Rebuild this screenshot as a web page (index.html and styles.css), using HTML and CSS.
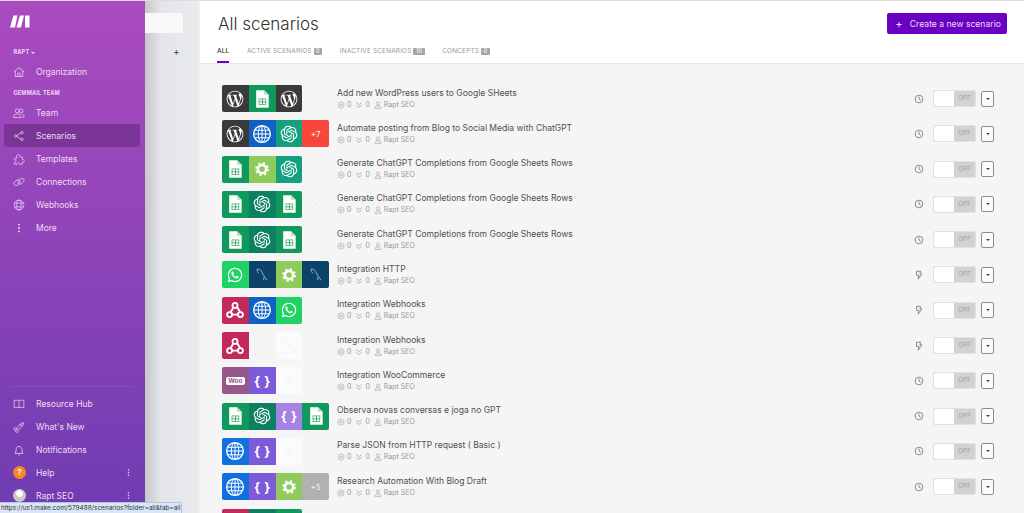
FILE: index.html
```html
<!DOCTYPE html>
<html lang="en">
<head>
    <meta charset="UTF-8">
    <title>All scenarios</title>
    <link rel="stylesheet" href="styles.css">
</head>
<body>
    <svg class="sprites">
        <symbol id="i-wp" viewBox="-2.4 -2.4 28.8 28.8"><path fill="#fff" d="M21.469 6.825c.84 1.537 1.318 3.3 1.318 5.175 0 3.979-2.156 7.456-5.363 9.325l3.295-9.527c.615-1.54.82-2.771.82-3.864 0-.405-.026-.78-.07-1.11m-7.981.105c.647-.03 1.232-.105 1.232-.105.582-.075.514-.93-.067-.899 0 0-1.755.135-2.88.135-1.064 0-2.85-.15-2.85-.15-.585-.03-.661.855-.075.885 0 0 .54.061 1.125.09l1.68 4.605-2.37 7.08L5.354 6.9c.649-.03 1.234-.1 1.234-.1.585-.075.516-.93-.065-.896 0 0-1.746.138-2.874.138-.2 0-.438-.008-.69-.015C4.911 3.15 8.235 1.215 12 1.215c2.809 0 5.365 1.072 7.286 2.833-.046-.003-.091-.009-.141-.009-1.06 0-1.812.923-1.812 1.914 0 .89.513 1.643 1.06 2.531.411.72.89 1.643.89 2.977 0 .915-.354 1.994-.821 3.479l-1.075 3.585-3.9-11.61.001.014zM12 22.784c-1.059 0-2.081-.153-3.048-.437l3.237-9.406 3.315 9.087c.024.053.05.101.078.149-1.12.393-2.325.609-3.582.609M1.211 12c0-1.564.336-3.05.935-4.39L7.29 21.709C3.694 19.96 1.212 16.271 1.211 12M12 0C5.385 0 0 5.385 0 12s5.385 12 12 12 12-5.385 12-12S18.615 0 12 0"/></symbol>
        <symbol id="i-sheet" viewBox="0 0 24 24"><path d="M5 1.5h9.5L20 7v15.5H5z" fill="#fff"/><path d="M14.5 1.5V7H20z" fill="#b9dcc9"/><path d="M8 11.5h9v7.5H8z" fill="#1a9c5e"/><path d="M8.8 12.3h3.2v2.6H8.8zM13 12.3h3.2v2.6H13zM8.8 15.8h3.2v2.4H8.8zM13 15.8h3.2v2.4H13z" fill="#fff"/></symbol>
        <symbol id="i-gear" viewBox="-2 -2 28 28"><circle cx="12" cy="12" r="5.7" fill="none" stroke="#fff" stroke-width="3.4"/><circle cx="12" cy="12" r="8.3" fill="none" stroke="#fff" stroke-width="2.6" stroke-dasharray="3.26 3.26"/></symbol>
        <symbol id="i-ai" viewBox="-2.4 -2.4 28.8 28.8"><path fill="#fff" d="M22.2819 9.8211a5.9847 5.9847 0 0 0-.5157-4.9108 6.0462 6.0462 0 0 0-6.5098-2.9A6.0651 6.0651 0 0 0 4.9807 4.1818a5.9847 5.9847 0 0 0-3.9977 2.9 6.0462 6.0462 0 0 0 .7427 7.0966 5.98 5.98 0 0 0 .511 4.9107 6.051 6.051 0 0 0 6.5146 2.9001A5.9847 5.9847 0 0 0 13.2599 24a6.0557 6.0557 0 0 0 5.7718-4.2058 5.9894 5.9894 0 0 0 3.9977-2.9001 6.0557 6.0557 0 0 0-.7475-7.0729zm-9.022 12.6081a4.4755 4.4755 0 0 1-2.8764-1.0408l.1419-.0804 4.7783-2.7582a.7948.7948 0 0 0 .3927-.6813v-6.7369l2.02 1.1686a.071.071 0 0 1 .038.052v5.5826a4.504 4.504 0 0 1-4.4945 4.4944zm-9.6607-4.1254a4.4708 4.4708 0 0 1-.5346-3.0137l.142.0852 4.783 2.7582a.7712.7712 0 0 0 .7806 0l5.8428-3.3685v2.3324a.0804.0804 0 0 1-.0332.0615L9.74 19.9502a4.4992 4.4992 0 0 1-6.1408-1.6464zM2.3408 7.8956a4.485 4.485 0 0 1 2.3655-1.9728V11.6a.7664.7664 0 0 0 .3879.6765l5.8144 3.3543-2.0201 1.1685a.0757.0757 0 0 1-.071 0l-4.8303-2.7865A4.504 4.504 0 0 1 2.3408 7.872zm16.5963 3.8558L13.1038 8.364 15.1192 7.2a.0757.0757 0 0 1 .071 0l4.8303 2.7913a4.4944 4.4944 0 0 1-.6765 8.1042v-5.6772a.79.79 0 0 0-.407-.667zm2.0107-3.0231l-.142-.0852-4.7735-2.7818a.7759.7759 0 0 0-.7854 0L9.409 9.2297V6.8974a.0662.0662 0 0 1 .0284-.0615l4.8303-2.7866a4.4992 4.4992 0 0 1 6.6802 4.66zM8.3065 12.863l-2.02-1.1638a.0804.0804 0 0 1-.038-.0567V6.0742a4.4992 4.4992 0 0 1 7.3757-3.4537l-.142.0805L8.704 5.459a.7948.7948 0 0 0-.3927.6813zm1.0976-2.3654l2.602-1.4998 2.6069 1.4998v2.9994l-2.5974 1.4997-2.6067-1.4997Z"/></symbol>
        <symbol id="i-globe" viewBox="0 0 24 24"><g fill="none" stroke="#fff" stroke-width="1.2"><circle cx="12" cy="12" r="10" stroke-width="1.7"/><ellipse cx="12" cy="12" rx="4.5" ry="10"/><path d="M12 2v20M3 7.5h18M2 12h20M3 16.5h18"/></g></symbol>
        <symbol id="i-wa" viewBox="-4.5 -4.5 33 33"><path fill="#fff" d="M17.472 14.382c-.297-.149-1.758-.867-2.03-.967-.273-.099-.471-.148-.67.15-.197.297-.767.966-.94 1.164-.173.199-.347.223-.644.075-.297-.15-1.255-.463-2.39-1.475-.883-.788-1.48-1.761-1.653-2.059-.173-.297-.018-.458.13-.606.134-.133.298-.347.446-.52.149-.174.198-.298.298-.497.099-.198.05-.371-.025-.52-.075-.149-.669-1.612-.916-2.207-.242-.579-.487-.5-.669-.51-.173-.008-.371-.01-.57-.01-.198 0-.52.074-.792.372-.272.297-1.04 1.016-1.04 2.479 0 1.462 1.065 2.875 1.213 3.074.149.198 2.096 3.2 5.077 4.487.709.306 1.262.489 1.694.625.712.227 1.36.195 1.871.118.571-.085 1.758-.719 2.006-1.413.248-.694.248-1.289.173-1.413-.074-.124-.272-.198-.57-.347m-5.421 7.403h-.004a9.87 9.87 0 01-5.031-1.378l-.361-.214-3.741.982.998-3.648-.235-.374a9.86 9.86 0 01-1.51-5.26c.001-5.45 4.436-9.884 9.888-9.884 2.64 0 5.122 1.03 6.988 2.898a9.825 9.825 0 012.893 6.994c-.003 5.45-4.437 9.884-9.885 9.884m8.413-18.297A11.815 11.815 0 0012.05 0C5.495 0 .16 5.335.157 11.892c0 2.096.547 4.142 1.588 5.945L.057 24l6.305-1.654a11.882 11.882 0 005.683 1.448h.005c6.554 0 11.89-5.335 11.893-11.893a11.821 11.821 0 00-3.48-8.413z"/></symbol>
        <symbol id="i-sql" viewBox="0 0 24 24"><path d="M6 5c3-.5 5 1 6.500 4.500 1 2.500 2.500 5 5.500 8.500M6 5c.2 2 .8 3.500 2 5M14.500 14.500l-.5 3.500" fill="none" stroke="#b8cfdd" stroke-width=".9"/></symbol>
        <symbol id="i-hook" viewBox="0 0 24 24"><g fill="none" stroke="#fff" stroke-width="2.2"><circle cx="12" cy="6.500" r="3"/><circle cx="5.500" cy="17.500" r="3"/><circle cx="18.500" cy="17.500" r="3"/><path d="M9.700 9.500l-3.500 6M14.500 8.500l3.600 6M8.500 17.500h7"/></g></symbol>
        <symbol id="i-cross" viewBox="0 0 24 24"><path d="M3 3l18 18M21 3L3 21" stroke="#ececec" stroke-width=".6" fill="none"/></symbol>

        <symbol id="n-home" viewBox="0 0 16 16"><path d="M1.500 7.800L8 2l6.500 5.800M3 6.800V14h10V6.800M6.500 14V9.500h3V14" fill="none" stroke="currentColor"/></symbol>
        <symbol id="n-team" viewBox="0 0 16 16"><g fill="none" stroke="currentColor" stroke-width=".9"><circle cx="5.700" cy="5" r="2.700"/><circle cx="10.800" cy="5" r="2.500"/><path d="M1 14c0-3 1.500-4.800 4.700-4.800s4.800 1.800 4.800 4.800zM11 9.200c2.600 0 4 1.700 4 4.300h-3"/></g></symbol>
        <symbol id="n-share" viewBox="0 0 16 16"><g fill="none" stroke="currentColor" stroke-width=".9"><circle cx="3.500" cy="8" r="1.600"/><circle cx="12" cy="3.500" r="1.600"/><circle cx="12" cy="12.500" r="1.600"/><path d="M5 7.200l5.500-3M5 8.800l5.500 3"/></g></symbol>
        <symbol id="n-puzzle" viewBox="0 0 16 16"><path d="M2 7h3c-.8-3 0-5 2-5s2.600 2 2 3.500h3.500V8.500c1.500-.5 2.500.2 2.500 1.800s-1 2.200-2.500 1.700V15H8.500c.4-1.300-.2-2-1.500-2s-2 .8-1.500 2H2v-3c1 .3 1.800-.3 1.800-1.500S3 8.700 2 9z" fill="none" stroke="currentColor" stroke-width=".9"/></symbol>
        <symbol id="n-link" viewBox="0 0 16 16"><g fill="none" stroke="currentColor" stroke-width=".9"><rect x=".8" y="6.200" width="9" height="5.600" rx="2.800" transform="rotate(-40 5.300 9)"/><rect x="6.200" y="4.200" width="9" height="5.600" rx="2.800" transform="rotate(-40 10.700 7)"/></g></symbol>
        <symbol id="n-globe" viewBox="0 0 16 16"><g fill="none" stroke="currentColor" stroke-width=".9"><circle cx="8" cy="8" r="6.500"/><ellipse cx="8" cy="8" rx="3" ry="6.500"/><path d="M2 5.500h12M2 10.500h12"/></g></symbol>
        <symbol id="n-dots" viewBox="0 0 16 16"><circle cx="8" cy="3.500" r="1.300" fill="currentColor"/><circle cx="8" cy="8" r="1.300" fill="currentColor"/><circle cx="8" cy="12.500" r="1.300" fill="currentColor"/></symbol>
        <symbol id="n-book" viewBox="0 0 16 16"><path d="M1.500 3h5.200c.7 0 1.300.5 1.300 1.200C8 3.500 8.600 3 9.300 3h5.200v9.500H9.300c-.7 0-1.300.4-1.300 1 0-.6-.6-1-1.300-1H1.500zM8 4.200v9.300" fill="none" stroke="currentColor" stroke-width=".9"/></symbol>
        <symbol id="n-rocket" viewBox="0 0 16 16"><g fill="none" stroke="currentColor" stroke-width=".9"><path d="M5.500 8.500L10 3.500 14.500 2 13 6.500l-5 4.500z"/><circle cx="10.500" cy="5.500" r="1"/><rect x="1.500" y="9" width="3.500" height="3" rx=".8"/><rect x="3.500" y="12" width="3.500" height="3" rx=".8"/></g></symbol>
        <symbol id="n-bell" viewBox="0 0 16 16"><path d="M2.500 12.500c1-1 1.500-2 1.500-4.500 0-2.800 1.700-4.800 4-4.800s4 2 4 4.800c0 2.500.5 3.500 1.500 4.500zM7 14.500h2" fill="none" stroke="currentColor"/></symbol>

        <symbol id="m-ops" viewBox="0 0 12 12"><g fill="none" stroke="#999" stroke-width=".9"><path d="M6 1l4.300 2.500v5L6 11 1.700 8.500v-5z"/><circle cx="6" cy="6" r="1.700"/></g></symbol>
        <symbol id="m-down" viewBox="0 0 12 12"><path d="M2 2.500l4 3 4-3M2 6.500l4 3 4-3" fill="none" stroke="#999" stroke-width="1"/></symbol>
        <symbol id="m-user" viewBox="0 0 12 12"><g fill="none" stroke="#999" stroke-width=".9"><circle cx="6" cy="3.700" r="2.400"/><path d="M1.500 11c0-2.500 1.800-3.700 4.500-3.700s4.500 1.200 4.500 3.700z"/></g></symbol>
        <symbol id="s-clock" viewBox="0 0 12 12"><g fill="none" stroke="#777" stroke-width="1"><circle cx="6" cy="6" r="4.600"/><path d="M6 3v3.200l2.200 1.300"/></g></symbol>
        <symbol id="s-bolt" viewBox="0 0 12 12"><path d="M3 1.500h5L7 4.500h2.500L5 11l1-4.500H3z" fill="none" stroke="#777" stroke-width="1"/></symbol>
    </svg>

    <aside class="sidebar">
        <svg class="logo" viewBox="0 0 20 13"><path d="M0 12.500L3.500 .5H7.500L5 12.500zM6.500 12.500L10 .5H14L11 12.500zM15 .5H19.500V12.500H15z" fill="#fff"/></svg>
        <div class="org-label">RAPT <span class="caret"></span></div>
        <a class="nav-item"><svg><use href="#n-home"/></svg>Organization</a>
        <div class="team-label">GEMMAIL TEAM</div>
        <a class="nav-item"><svg><use href="#n-team"/></svg>Team</a>
        <a class="nav-item active"><svg><use href="#n-share"/></svg>Scenarios</a>
        <a class="nav-item"><svg><use href="#n-puzzle"/></svg>Templates</a>
        <a class="nav-item"><svg><use href="#n-link"/></svg>Connections</a>
        <a class="nav-item"><svg><use href="#n-globe"/></svg>Webhooks</a>
        <a class="nav-item"><svg><use href="#n-dots"/></svg>More</a>

        <div class="sidebar-bottom">
            <a class="nav-item"><svg><use href="#n-book"/></svg>Resource Hub</a>
            <a class="nav-item"><svg><use href="#n-rocket"/></svg>What's New</a>
            <a class="nav-item"><svg><use href="#n-bell"/></svg>Notifications</a>
            <a class="nav-item"><span class="help-dot">?</span>Help<svg class="kebab"><use href="#n-dots"/></svg></a>
            <a class="nav-item"><span class="avatar"></span>Rapt SEO<svg class="kebab"><use href="#n-dots"/></svg></a>
        </div>
    </aside>

    <div class="folders">
        <div class="folder-search"></div>
        <div class="folder-add">+</div>
    </div>

    <main class="content">
        <header class="topbar">
            <div class="topbar-row">
                <h1>All scenarios</h1>
                <button class="create-btn"><span class="plus">+</span>Create a new scenario</button>
            </div>
            <nav class="tabs">
                <a class="tab selected">ALL</a>
                <a class="tab">ACTIVE SCENARIOS <b>0</b></a>
                <a class="tab">INACTIVE SCENARIOS <b>10</b></a>
                <a class="tab">CONCEPTS <b>0</b></a>
            </nav>
        </header>

        <section class="list">
            <div class="row">
                <div class="apps">
                    <span class="app c-wp"><svg><use href="#i-wp"/></svg></span>
                    <span class="app c-sheet"><svg><use href="#i-sheet"/></svg></span>
                    <span class="app c-wp"><svg><use href="#i-wp"/></svg></span>
                    <span class="app blank"><svg><use href="#i-cross"/></svg></span>
                </div>
                <div class="info">
                    <div class="name">Add new WordPress users to Google SHeets</div>
                    <div class="meta"><svg><use href="#m-ops"/></svg>0 <svg><use href="#m-down"/></svg>0 <svg><use href="#m-user"/></svg>Rapt SEO</div>
                </div>
                <div class="controls"><svg class="sched"><use href="#s-clock"/></svg><div class="toggle"><i></i><span>OFF</span></div><button class="more-btn"></button></div>
            </div>
            <div class="row">
                <div class="apps">
                    <span class="app c-wp"><svg><use href="#i-wp"/></svg></span>
                    <span class="app c-globe-d"><svg><use href="#i-globe"/></svg></span>
                    <span class="app c-ai"><svg><use href="#i-ai"/></svg></span>
                    <span class="app c-red">+7</span>
                </div>
                <div class="info">
                    <div class="name">Automate posting from Blog to Social Media with ChatGPT</div>
                    <div class="meta"><svg><use href="#m-ops"/></svg>0 <svg><use href="#m-down"/></svg>0 <svg><use href="#m-user"/></svg>Rapt SEO</div>
                </div>
                <div class="controls"><svg class="sched"><use href="#s-clock"/></svg><div class="toggle"><i></i><span>OFF</span></div><button class="more-btn"></button></div>
            </div>
            <div class="row">
                <div class="apps">
                    <span class="app c-sheet"><svg><use href="#i-sheet"/></svg></span>
                    <span class="app c-gear"><svg><use href="#i-gear"/></svg></span>
                    <span class="app c-ai"><svg><use href="#i-ai"/></svg></span>
                    <span class="app blank"><svg><use href="#i-cross"/></svg></span>
                </div>
                <div class="info">
                    <div class="name">Generate ChatGPT Completions from Google Sheets Rows</div>
                    <div class="meta"><svg><use href="#m-ops"/></svg>0 <svg><use href="#m-down"/></svg>0 <svg><use href="#m-user"/></svg>Rapt SEO</div>
                </div>
                <div class="controls"><svg class="sched"><use href="#s-clock"/></svg><div class="toggle"><i></i><span>OFF</span></div><button class="more-btn"></button></div>
            </div>
            <div class="row">
                <div class="apps">
                    <span class="app c-sheet"><svg><use href="#i-sheet"/></svg></span>
                    <span class="app c-ai-d"><svg><use href="#i-ai"/></svg></span>
                    <span class="app c-sheet"><svg><use href="#i-sheet"/></svg></span>
                    <span class="app blank"><svg><use href="#i-cross"/></svg></span>
                </div>
                <div class="info">
                    <div class="name">Generate ChatGPT Completions from Google Sheets Rows</div>
                    <div class="meta"><svg><use href="#m-ops"/></svg>0 <svg><use href="#m-down"/></svg>0 <svg><use href="#m-user"/></svg>Rapt SEO</div>
                </div>
                <div class="controls"><svg class="sched"><use href="#s-clock"/></svg><div class="toggle"><i></i><span>OFF</span></div><button class="more-btn"></button></div>
            </div>
            <div class="row">
                <div class="apps">
                    <span class="app c-sheet"><svg><use href="#i-sheet"/></svg></span>
                    <span class="app c-ai-d"><svg><use href="#i-ai"/></svg></span>
                    <span class="app c-sheet"><svg><use href="#i-sheet"/></svg></span>
                    <span class="app blank"><svg><use href="#i-cross"/></svg></span>
                </div>
                <div class="info">
                    <div class="name">Generate ChatGPT Completions from Google Sheets Rows</div>
                    <div class="meta"><svg><use href="#m-ops"/></svg>0 <svg><use href="#m-down"/></svg>0 <svg><use href="#m-user"/></svg>Rapt SEO</div>
                </div>
                <div class="controls"><svg class="sched"><use href="#s-clock"/></svg><div class="toggle"><i></i><span>OFF</span></div><button class="more-btn"></button></div>
            </div>
            <div class="row">
                <div class="apps">
                    <span class="app c-wa"><svg><use href="#i-wa"/></svg></span>
                    <span class="app c-sql"><svg><use href="#i-sql"/></svg></span>
                    <span class="app c-gear"><svg><use href="#i-gear"/></svg></span>
                    <span class="app c-sql"><svg><use href="#i-sql"/></svg></span>
                </div>
                <div class="info">
                    <div class="name">Integration HTTP</div>
                    <div class="meta"><svg><use href="#m-ops"/></svg>0 <svg><use href="#m-down"/></svg>0 <svg><use href="#m-user"/></svg>Rapt SEO</div>
                </div>
                <div class="controls"><svg class="sched"><use href="#s-bolt"/></svg><div class="toggle"><i></i><span>OFF</span></div><button class="more-btn"></button></div>
            </div>
            <div class="row">
                <div class="apps">
                    <span class="app c-hook"><svg><use href="#i-hook"/></svg></span>
                    <span class="app c-globe-d"><svg><use href="#i-globe"/></svg></span>
                    <span class="app c-wa"><svg><use href="#i-wa"/></svg></span>
                    <span class="app blank"><svg><use href="#i-cross"/></svg></span>
                </div>
                <div class="info">
                    <div class="name">Integration Webhooks</div>
                    <div class="meta"><svg><use href="#m-ops"/></svg>0 <svg><use href="#m-down"/></svg>0 <svg><use href="#m-user"/></svg>Rapt SEO</div>
                </div>
                <div class="controls"><svg class="sched"><use href="#s-bolt"/></svg><div class="toggle"><i></i><span>OFF</span></div><button class="more-btn"></button></div>
            </div>
            <div class="row">
                <div class="apps">
                    <span class="app c-hook"><svg><use href="#i-hook"/></svg></span>
                    <span class="app blank"><svg><use href="#i-cross"/></svg></span>
                    <span class="app blank white"><svg><use href="#i-cross"/></svg></span>
                    <span class="app blank"><svg><use href="#i-cross"/></svg></span>
                </div>
                <div class="info">
                    <div class="name">Integration Webhooks</div>
                    <div class="meta"><svg><use href="#m-ops"/></svg>0 <svg><use href="#m-down"/></svg>0 <svg><use href="#m-user"/></svg>Rapt SEO</div>
                </div>
                <div class="controls"><svg class="sched"><use href="#s-bolt"/></svg><div class="toggle"><i></i><span>OFF</span></div><button class="more-btn"></button></div>
            </div>
            <div class="row">
                <div class="apps">
                    <span class="app c-woo"><em>Woo</em></span>
                    <span class="app c-json">{ }</span>
                    <span class="app blank white"><svg><use href="#i-cross"/></svg></span>
                    <span class="app blank"><svg><use href="#i-cross"/></svg></span>
                </div>
                <div class="info">
                    <div class="name">Integration WooCommerce</div>
                    <div class="meta"><svg><use href="#m-ops"/></svg>0 <svg><use href="#m-down"/></svg>0 <svg><use href="#m-user"/></svg>Rapt SEO</div>
                </div>
                <div class="controls"><svg class="sched"><use href="#s-clock"/></svg><div class="toggle"><i></i><span>OFF</span></div><button class="more-btn"></button></div>
            </div>
            <div class="row">
                <div class="apps">
                    <span class="app c-sheet"><svg><use href="#i-sheet"/></svg></span>
                    <span class="app c-ai-d"><svg><use href="#i-ai"/></svg></span>
                    <span class="app c-json-l">{ }</span>
                    <span class="app c-sheet"><svg><use href="#i-sheet"/></svg></span>
                </div>
                <div class="info">
                    <div class="name">Observa novas conversas e joga no GPT</div>
                    <div class="meta"><svg><use href="#m-ops"/></svg>0 <svg><use href="#m-down"/></svg>0 <svg><use href="#m-user"/></svg>Rapt SEO</div>
                </div>
                <div class="controls"><svg class="sched"><use href="#s-clock"/></svg><div class="toggle"><i></i><span>OFF</span></div><button class="more-btn"></button></div>
            </div>
            <div class="row">
                <div class="apps">
                    <span class="app c-globe"><svg><use href="#i-globe"/></svg></span>
                    <span class="app c-json">{ }</span>
                    <span class="app blank white"><svg><use href="#i-cross"/></svg></span>
                    <span class="app blank"><svg><use href="#i-cross"/></svg></span>
                </div>
                <div class="info">
                    <div class="name">Parse JSON from HTTP request ( Basic )</div>
                    <div class="meta"><svg><use href="#m-ops"/></svg>0 <svg><use href="#m-down"/></svg>0 <svg><use href="#m-user"/></svg>Rapt SEO</div>
                </div>
                <div class="controls"><svg class="sched"><use href="#s-clock"/></svg><div class="toggle"><i></i><span>OFF</span></div><button class="more-btn"></button></div>
            </div>
            <div class="row">
                <div class="apps">
                    <span class="app c-globe"><svg><use href="#i-globe"/></svg></span>
                    <span class="app c-json">{ }</span>
                    <span class="app c-gear"><svg><use href="#i-gear"/></svg></span>
                    <span class="app c-gray">+5</span>
                </div>
                <div class="info">
                    <div class="name">Research Automation With Blog Draft</div>
                    <div class="meta"><svg><use href="#m-ops"/></svg>0 <svg><use href="#m-down"/></svg>0 <svg><use href="#m-user"/></svg>Rapt SEO</div>
                </div>
                <div class="controls"><svg class="sched"><use href="#s-clock"/></svg><div class="toggle"><i></i><span>OFF</span></div><button class="more-btn"></button></div>
            </div>
            <div class="row">
                <div class="apps">
                    <span class="app c-hook"></span>
                    <span class="app c-ai-d"></span>
                    <span class="app c-sheet"></span>
                    <span class="app blank"></span>
                </div>
            </div>
        </section>
    </main>

    <div class="status-link">https://us1.make.com/579488/scenarios?folder=all&amp;tab=all</div>
</body>
</html>
```

FILE: styles.css
```css
* {
    box-sizing: border-box;
}
html, body {
    height: 513px;
    overflow: hidden;
}
body {
    margin: 0;
    display: flex;
    font-family: 'Inter', sans-serif;
    color: #333;
    background-color: #f5f5f5;
    border-top: 1px solid #ddd;
}
.sprites {
    display: none;
}

/* sidebar */
.sidebar {
    width: 145px;
    flex: none;
    display: flex;
    flex-direction: column;
    padding: 0 5px 6px 4px;
    background: linear-gradient(180deg, #aa4bbf 0%, #6f3cb1 100%);
    color: #eeddf5;
}
.logo {
    width: 20px;
    height: 13px;
    flex: none;
    margin: 14px 0 0 6px;
}
.org-label, .team-label {
    font-size: 5.5px;
    font-weight: 700;
    letter-spacing: .2px;
    color: #ecd8f3;
    margin-left: 9.5px;
}
.org-label {
    margin-top: 21px;
    height: 8px;
}
.caret {
    display: inline-block;
    border: 2px solid transparent;
    border-top-color: #ecd8f3;
    border-bottom: 0;
    vertical-align: middle;
}
.org-label + .nav-item {
    margin-top: 3px;
}
.team-label {
    margin: 7px 0 3px 9.5px;
    height: 8px;
}
.nav-item {
    display: flex;
    align-items: center;
    height: 23px;
    flex: none;
    padding-left: 9px;
    font-size: 8.5px;
    border-radius: 3px;
}
.nav-item svg {
    width: 12px;
    height: 12px;
    margin-right: 11px;
    flex: none;
}
.nav-item.active {
    background-color: #7b3597;
}
.nav-item .kebab {
    width: 9px;
    height: 9px;
    margin: 0 7px 0 auto;
}
.help-dot {
    width: 13px;
    height: 13px;
    margin-right: 10px;
    flex: none;
    border-radius: 50%;
    background-color: #f7881e;
    color: #fff;
    font-size: 8px;
    font-weight: 700;
    text-align: center;
    line-height: 13px;
}
.avatar {
    width: 13px;
    height: 13px;
    margin-right: 10px;
    flex: none;
    border-radius: 50%;
    background: radial-gradient(circle at 50% 35%, #fff 0 3px, #c9c9c9 3.5px);
}
.sidebar-bottom {
    margin-top: auto;
    padding-top: 5px;
    border-top: 1px solid #8a4fbc;
    margin-left: 8px;
    margin-right: 8px;
}
.sidebar-bottom .nav-item {
    margin-left: -8px;
    margin-right: -8px;
}

/* folder column */
.folders {
    width: 55px;
    flex: none;
    padding-top: 12px;
    background: linear-gradient(90deg, #c7c7ca 0%, #e4e5e9 30%, #e9ebef 100%);
    border-right: 1px solid #f0f1f3;
}
.folder-search {
    width: 38px;
    height: 20px;
    background-color: #f8f8f8;
    border-radius: 0 2px 2px 0;
}
.folder-add {
    margin: 12px 0 0 28px;
    font-size: 10px;
    line-height: 12px;
    color: #444;
}

/* main */
.content {
    flex: 1;
    min-width: 0;
}
.topbar {
    height: 63px;
    padding: 0 17px 0 17px;
    background-color: #fff;
    border-bottom: 1px solid #e6e6e6;
    display: flex;
    flex-direction: column;
}
.topbar-row {
    display: flex;
    justify-content: space-between;
    align-items: flex-start;
    padding-top: 12px;
    height: 43px;
}
h1 {
    margin: 0 0 0 1px;
    font-size: 17px;
    font-weight: 300;
    line-height: 22px;
    color: #333;
}
.create-btn {
    height: 21px;
    width: 120px;
    border: none;
    border-radius: 2px;
    background-color: #6a00c4;
    color: #ecdcf8;
    font-family: 'Inter', sans-serif;
    font-size: 8.6px;
    white-space: nowrap;
    display: flex;
    align-items: center;
    padding: 0 0 0 8px;
}
.plus {
    font-size: 12px;
    color: #fff;
    margin-right: 7px;
    font-weight: 300;
}
.tabs {
    display: flex;
    gap: 17.5px;
    flex: 1;
}
.tab {
    font-size: 6.5px;
    line-height: 15px;
    color: #999;
    height: 19px;
    letter-spacing: .14px;
}
.tab b {
    display: inline-block;
    padding: 0 2.5px;
    font-size: 5.5px;
    line-height: 7px;
    font-weight: 600;
    border-radius: 1px;
    background-color: #a5a5a5;
    color: #eee;
}
.tab.selected {
    color: #333;
    font-weight: 500;
    border-bottom: 2px solid #6a00c4;
}

/* scenario rows */
.list {
    display: flex;
    flex-direction: column;
    gap: 8.3px;
    padding: 21px 30px 0 22px;
}
.row {
    display: flex;
    align-items: center;
    height: 27px;
    flex: none;
}
.apps {
    display: flex;
    width: 115px;
    flex: none;
}
.app {
    width: 26.75px;
    height: 27px;
    display: flex;
    align-items: center;
    justify-content: center;
    font-size: 8px;
    color: #fff;
    flex: none;
}
.app:first-child {
    border-radius: 2px 0 0 2px;
}
.app:nth-child(3):has(+ .blank), .app:last-child {
    border-radius: 0 2px 2px 0;
}
.app svg {
    width: 20px;
    height: 20px;
}
.blank {
    background: none;
}
.blank svg {
    width: 24px;
    height: 24px;
}
.blank.white {
    background-color: #fbfbfb;
}
.c-wp { background-color: #3a3a3a; }
.c-sheet { background-color: #0f9a5b; }
.c-gear { background-color: #8fcb5c; }
.c-ai { background-color: #13a07e; }
.c-ai-d { background-color: #0e8062; }
.c-globe { background-color: #1070e0; }
.c-globe-d { background-color: #0f62c4; }
.c-wa { background-color: #20d264; }
.c-sql { background-color: #0c4469; }
.c-hook { background-color: #c32a5b; }
.c-woo { background-color: #96588a; }
.c-woo em {
    padding: 0 2px;
    font-size: 6.5px;
    font-style: normal;
    font-weight: 700;
    line-height: 8px;
    border-radius: 2px;
    background-color: #fff;
    color: #96588a;
}
.c-json { background-color: #7d5bd8; font-size: 13px; font-weight: 700; word-spacing: 1px; }
.c-json-l { background-color: #a583e5; font-size: 13px; font-weight: 700; word-spacing: 1px; }
.c-red { background-color: #f8463a; }
.c-gray { background-color: #b1b1b1; color: #eee; }
.info {
    flex: 1;
    min-width: 0;
}
.name {
    font-size: 8.55px;
    line-height: 11px;
    color: #505050;
}
.meta {
    display: flex;
    align-items: center;
    font-size: 7px;
    line-height: 10px;
    color: #999;
    margin-top: 1px;
}
.meta svg {
    width: 8px;
    height: 8px;
    margin-right: 2px;
    margin-left: 4px;
}
.meta svg:first-child {
    margin-left: 0;
}
.controls {
    display: flex;
    align-items: center;
}
.sched {
    width: 10px;
    height: 10px;
    margin-right: 9px;
}
.toggle {
    width: 43px;
    height: 17px;
    display: flex;
    border-radius: 2px;
    border: 1px solid #e2e2e2;
    background-color: #d2d2d2;
}
.toggle i {
    width: 20px;
    background-color: #fff;
    border-radius: 2px 0 0 2px;
}
.toggle span {
    flex: 1;
    font-size: 6.5px;
    line-height: 15px;
    text-align: center;
    color: #a9a9a9;
    font-weight: 500;
}
.more-btn {
    position: relative;
    width: 13px;
    height: 16px;
    margin-left: 5px;
    padding: 0;
    border: 1px solid #8c8c8c;
    border-radius: 2px;
    background-color: #fbfbfb;
}
.more-btn::after {
    content: "";
    position: absolute;
    left: 4px;
    top: 6px;
    border: 2px solid transparent;
    border-top-color: #444;
    border-bottom: 0;
}

/* link preview overlay */
.status-link {
    position: fixed;
    left: 0;
    bottom: 0;
    width: 182px;
    height: 11px;
    padding-left: 1px;
    font-size: 6.45px;
    line-height: 10px;
    white-space: nowrap;
    color: #333;
    background-color: #d9e6f7;
    border: 1px solid #b5c7de;
    border-left: none;
    border-bottom: none;
    border-radius: 0 2px 0 0;
}
```
